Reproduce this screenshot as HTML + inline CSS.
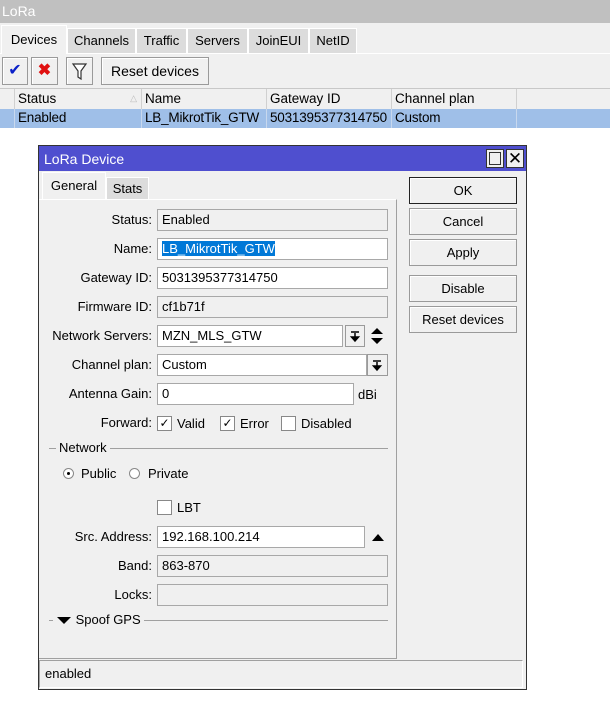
<!DOCTYPE html>
<html><head><style>
*{box-sizing:border-box;margin:0;padding:0}
body{width:610px;height:720px;background:#fff;font-family:"Liberation Sans",Arial,sans-serif;font-size:13px;color:#000;position:relative;overflow:hidden}
.a{position:absolute}
.t{position:absolute;white-space:nowrap;line-height:16px}
.tab{position:absolute;background:#dcdcdc;border:1px solid #fff;border-bottom:none;text-align:center;line-height:24px}
.btn{position:absolute;background:#f0f0f0;border:1px solid #9a9a9a;box-shadow:inset 1px 1px 0 #fff;text-align:center}
.f{position:absolute;height:22px;border:1px solid #a8a8a8;background:#fff;padding-left:4px;line-height:20px;white-space:nowrap}
.ro{background:#f0f0f0}
.lbl{position:absolute;right:458px;text-align:right;white-space:nowrap;line-height:22px}
.cb{position:absolute;width:15px;height:15px;border:1px solid #888;background:#fff;font-size:12px;line-height:13px;text-align:center}
.th{position:absolute;top:89px;height:20px;border-right:1px solid #d0d0d0;padding-left:3px;line-height:19px;font-size:13.5px;overflow:hidden;white-space:nowrap}
.td{position:absolute;top:109px;height:19px;border-right:1px solid #c8d8ee;padding-left:3px;line-height:18px;font-size:13.5px;overflow:hidden;white-space:nowrap;letter-spacing:-0.2px}
.dd{position:absolute;background:#f0f0f0;border:1px solid #9a9a9a}
</style></head><body>
<div class="a" style="left:0;top:0;width:610px;height:23px;background:#c0c0c0"></div>
<div class="t" style="left:2px;top:3px;color:#fff;font-size:14px">LoRa</div>
<div class="a" style="left:0;top:23px;width:610px;height:65px;background:#f0f0f0"></div>
<div class="a" style="left:0;top:53px;width:610px;height:1px;background:#fff"></div>
<div class="tab" style="left:1px;top:25px;width:66px;height:29px;background:#f0f0f0;line-height:27px">Devices</div>
<div class="tab" style="left:67px;top:28px;width:69px;height:25px">Channels</div>
<div class="tab" style="left:136px;top:28px;width:51px;height:25px">Traffic</div>
<div class="tab" style="left:187px;top:28px;width:61px;height:25px">Servers</div>
<div class="tab" style="left:248px;top:28px;width:61px;height:25px">JoinEUI</div>
<div class="tab" style="left:309px;top:28px;width:48px;height:25px">NetID</div>
<div class="btn" style="left:2px;top:57px;width:26px;height:28px;line-height:26px;color:#0a20c8;font-size:16px">✔</div>
<div class="btn" style="left:31px;top:57px;width:27px;height:28px;line-height:26px;color:#e01010;font-size:16px;font-weight:bold">✖</div>
<div class="btn" style="left:66px;top:57px;width:27px;height:28px">
<svg width="25" height="26" viewBox="0 0 25 26"><path d="M6 6h13l-5 7v8l-3-2v-6z" fill="#fff" stroke="#333" stroke-width="1.2"/></svg></div>
<div class="btn" style="left:101px;top:57px;width:108px;height:28px;line-height:26px;font-size:14px">Reset devices</div>
<div class="a" style="left:0;top:88px;width:610px;height:21px;background:#f0f0f0;border-top:1px solid #c8c8c8"></div>
<div class="th" style="left:0;width:15px"></div>
<div class="th" style="left:15px;width:127px">Status<span style="position:absolute;right:4px;color:#bbb;font-size:9px">△</span></div>
<div class="th" style="left:142px;width:125px">Name</div>
<div class="th" style="left:267px;width:125px">Gateway ID</div>
<div class="th" style="left:392px;width:125px">Channel plan</div>
<div class="a" style="left:0;top:109px;width:610px;height:19px;background:#9fbfe8"></div>
<div class="td" style="left:0;width:15px"></div>
<div class="td" style="left:15px;width:127px">Enabled</div>
<div class="td" style="left:142px;width:125px">LB_MikrotTik_GTW</div>
<div class="td" style="left:267px;width:125px">5031395377314750</div>
<div class="td" style="left:392px;width:125px">Custom</div>

<!-- dialog -->
<div class="a" style="left:38px;top:145px;width:489px;height:545px;background:#f0f0f0;border:1px solid #333"></div>
<div class="a" style="left:39px;top:146px;width:487px;height:25px;background:#4f4fcf"></div>
<div class="t" style="left:44px;top:151px;color:#fff;font-size:14px">LoRa Device</div>
<div class="a" style="left:486px;top:149px;width:18px;height:19px;background:#f0f0f0;border:1px solid #333"><div class="a" style="left:2px;top:2px;width:12px;height:13px;border:1px solid #333"></div></div>
<div class="a" style="left:506px;top:149px;width:18px;height:19px;background:#f0f0f0;border:1px solid #333;text-align:center;line-height:17px;font-size:17px">✕</div>
<div class="tab" style="left:42px;top:172px;width:64px;height:28px;background:#f0f0f0;border-color:#fff;line-height:26px">General</div>
<div class="tab" style="left:106px;top:177px;width:43px;height:22px;line-height:21px">Stats</div>
<div class="a" style="left:39px;top:199px;width:358px;height:460px;border-right:1px solid #a0a0a0;border-bottom:1px solid #a0a0a0;border-top:1px solid #fff"></div>

<div class="btn" style="left:409px;top:177px;width:108px;height:27px;line-height:25px;border-color:#222">OK</div>
<div class="btn" style="left:409px;top:208px;width:108px;height:27px;line-height:25px">Cancel</div>
<div class="btn" style="left:409px;top:239px;width:108px;height:27px;line-height:25px">Apply</div>
<div class="btn" style="left:409px;top:275px;width:108px;height:27px;line-height:25px">Disable</div>
<div class="btn" style="left:409px;top:306px;width:108px;height:27px;line-height:25px">Reset devices</div>

<div class="lbl" style="top:209px">Status:</div><div class="f ro" style="left:157px;top:209px;width:231px">Enabled</div>
<div class="lbl" style="top:238px">Name:</div><div class="f" style="left:157px;top:238px;width:231px"><span style="background:#0078d7;color:#fff">LB_MikrotTik_GTW</span></div>
<div class="lbl" style="top:267px">Gateway ID:</div><div class="f" style="left:157px;top:267px;width:231px">5031395377314750</div>
<div class="lbl" style="top:296px">Firmware ID:</div><div class="f ro" style="left:157px;top:296px;width:231px">cf1b71f</div>
<div class="lbl" style="top:325px">Network Servers:</div><div class="f" style="left:157px;top:325px;width:186px">MZN_MLS_GTW</div>
<div class="dd" style="left:345px;top:325px;width:20px;height:22px"><svg width="18" height="20"><path d="M5 6h8M9 7v5M5.5 11h7L9 15z" stroke="#000" stroke-width="1.5" fill="#000"/></svg></div>
<svg class="a" style="left:370px;top:327px" width="14" height="18"><path d="M1 7L7 1l6 6zM1 11l6 6 6-6z" fill="#000"/></svg>
<div class="lbl" style="top:354px">Channel plan:</div><div class="f" style="left:157px;top:354px;width:210px">Custom</div>
<div class="dd" style="left:367px;top:354px;width:21px;height:22px"><svg width="19" height="20"><path d="M5 6h8M9 7v5M5.5 11h7L9 15z" stroke="#000" stroke-width="1.5" fill="#000"/></svg></div>
<div class="lbl" style="top:383px">Antenna Gain:</div><div class="f" style="left:157px;top:383px;width:197px">0</div>
<div class="t" style="left:358px;top:387px">dBi</div>
<div class="lbl" style="top:412px">Forward:</div>
<div class="cb" style="left:157px;top:416px">✓</div><div class="t" style="left:177px;top:416px">Valid</div>
<div class="cb" style="left:220px;top:416px">✓</div><div class="t" style="left:240px;top:416px">Error</div>
<div class="cb" style="left:281px;top:416px"></div><div class="t" style="left:301px;top:416px">Disabled</div>

<div class="a" style="left:49px;top:448px;width:339px;height:1px;background:#a0a0a0"></div>
<div class="t" style="left:56px;top:440px;background:#f0f0f0;padding:0 3px">Network</div>
<div class="a" style="left:63px;top:468px;width:11px;height:11px;border-radius:50%;background:#fff;border:1px solid #888"><div class="a" style="left:3px;top:3px;width:3px;height:3px;border-radius:50%;background:#000"></div></div>
<div class="t" style="left:81px;top:466px">Public</div>
<div class="a" style="left:129px;top:468px;width:11px;height:11px;border-radius:50%;background:#fff;border:1px solid #888"></div>
<div class="t" style="left:148px;top:466px">Private</div>
<div class="cb" style="left:157px;top:500px"></div><div class="t" style="left:177px;top:500px">LBT</div>
<div class="lbl" style="top:526px">Src. Address:</div><div class="f" style="left:157px;top:526px;width:208px">192.168.100.214</div>
<svg class="a" style="left:372px;top:534px" width="12" height="7"><path d="M0 7L6 0l6 7z" fill="#000"/></svg>
<div class="lbl" style="top:555px">Band:</div><div class="f ro" style="left:157px;top:555px;width:231px">863-870</div>
<div class="lbl" style="top:584px">Locks:</div><div class="f ro" style="left:157px;top:584px;width:231px"></div>
<div class="a" style="left:49px;top:620px;width:339px;height:1px;background:#a0a0a0"></div>
<div class="t" style="left:53px;top:612px;background:#f0f0f0;padding:0 3px"><svg width="16" height="9" style="vertical-align:middle"><path d="M1 1h14L8 8z" fill="#000"/></svg> Spoof GPS</div>
<div class="a" style="left:39px;top:660px;width:484px;height:28px;border:1px solid #a0a0a0;border-right-color:#fff;border-bottom-color:#fff"></div>
<div class="t" style="left:45px;top:666px">enabled</div>
</body></html>
